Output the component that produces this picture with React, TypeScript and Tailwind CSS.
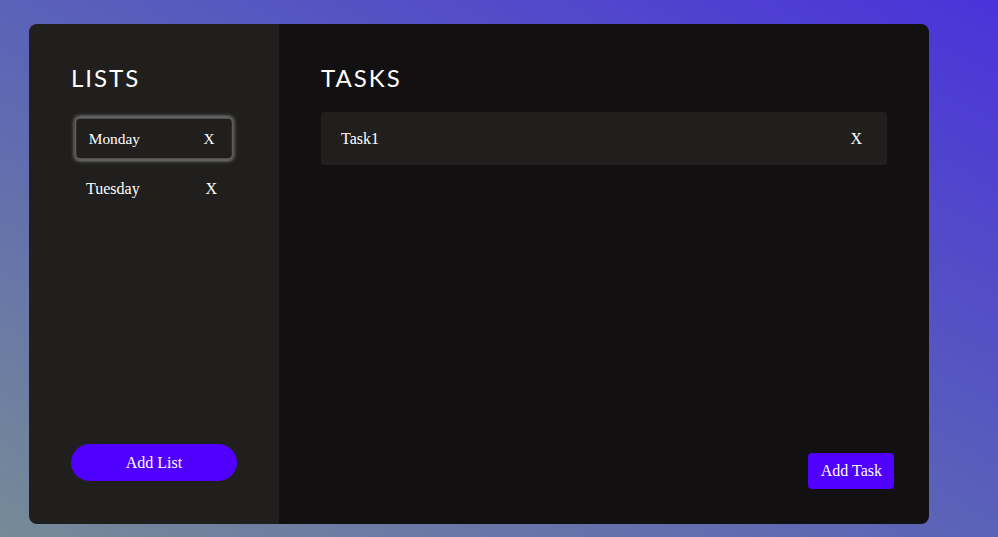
import React from 'react';

export default function App() {
    const lists = [
        { id: 'l-1', name: 'Monday', active: true },
        { id: 'l-2', name: 'Tuesday', active: false },
    ];
    const tasks = [{ id: 't-1', name: 'Task1' }];

    return (
        <div className="w-[998px] h-[537px] overflow-hidden bg-[linear-gradient(to_top_right,#758b97_0%,#5a62b8_50%,#4a33da_100%)] font-['Liberation_Serif',serif]">
            <div className="ml-[29px] pt-[24px]">
                <div className="flex w-[900px] h-[500px] rounded-[8px] overflow-hidden">
                    {/* lists column */}
                    <div className="w-[250px] bg-[#201f1e] flex flex-col px-[42px] pt-[39px] pb-[43px]">
                        <h2 className="font-['Lato',sans-serif] text-[24px] leading-[30px] tracking-[2px] text-white">LISTS</h2>
                        <div className="mt-[23px] flex flex-col gap-[5px]">
                            {lists.map(list => (
                                <div
                                    key={list.id}
                                    className={`h-[45px] flex items-center justify-between pl-[13px] pr-[18px] text-[16px] text-white rounded-[6px] ${list.active ? 'scale-[0.96] border-2 border-[#5f5e5d] shadow-[0_0_4px_#8a8a8a]' : 'border-2 border-transparent'}`}
                                >
                                    <span>{list.name}</span>
                                    <span>X</span>
                                </div>
                            ))}
                        </div>
                        <button className="mt-auto h-[37px] w-full rounded-full bg-[#4f00ff] text-white text-[16px]">Add List</button>
                    </div>

                    {/* tasks column */}
                    <div className="flex-1 bg-[#121011] flex flex-col pl-[42px] pr-[42px] pt-[39px] pb-[35px]">
                        <h2 className="font-['Lato',sans-serif] text-[24px] leading-[30px] tracking-[2px] text-white">TASKS</h2>
                        <div className="mt-[19px] flex flex-col gap-2">
                            {tasks.map(task => (
                                <div key={task.id} className="h-[53px] bg-[#201f1e] rounded-[4px] flex items-center justify-between pl-[20px] pr-[25px] text-[16px] text-white">
                                    <span>{task.name}</span>
                                    <span>X</span>
                                </div>
                            ))}
                        </div>
                        <div className="mt-auto flex justify-end -mr-[7px]">
                            <button className="h-[36px] pl-[13px] pr-[12px] rounded-[4px] bg-[#4f00ff] text-white text-[16px]">Add Task</button>
                        </div>
                    </div>
                </div>
            </div>
        </div>
    );
}
